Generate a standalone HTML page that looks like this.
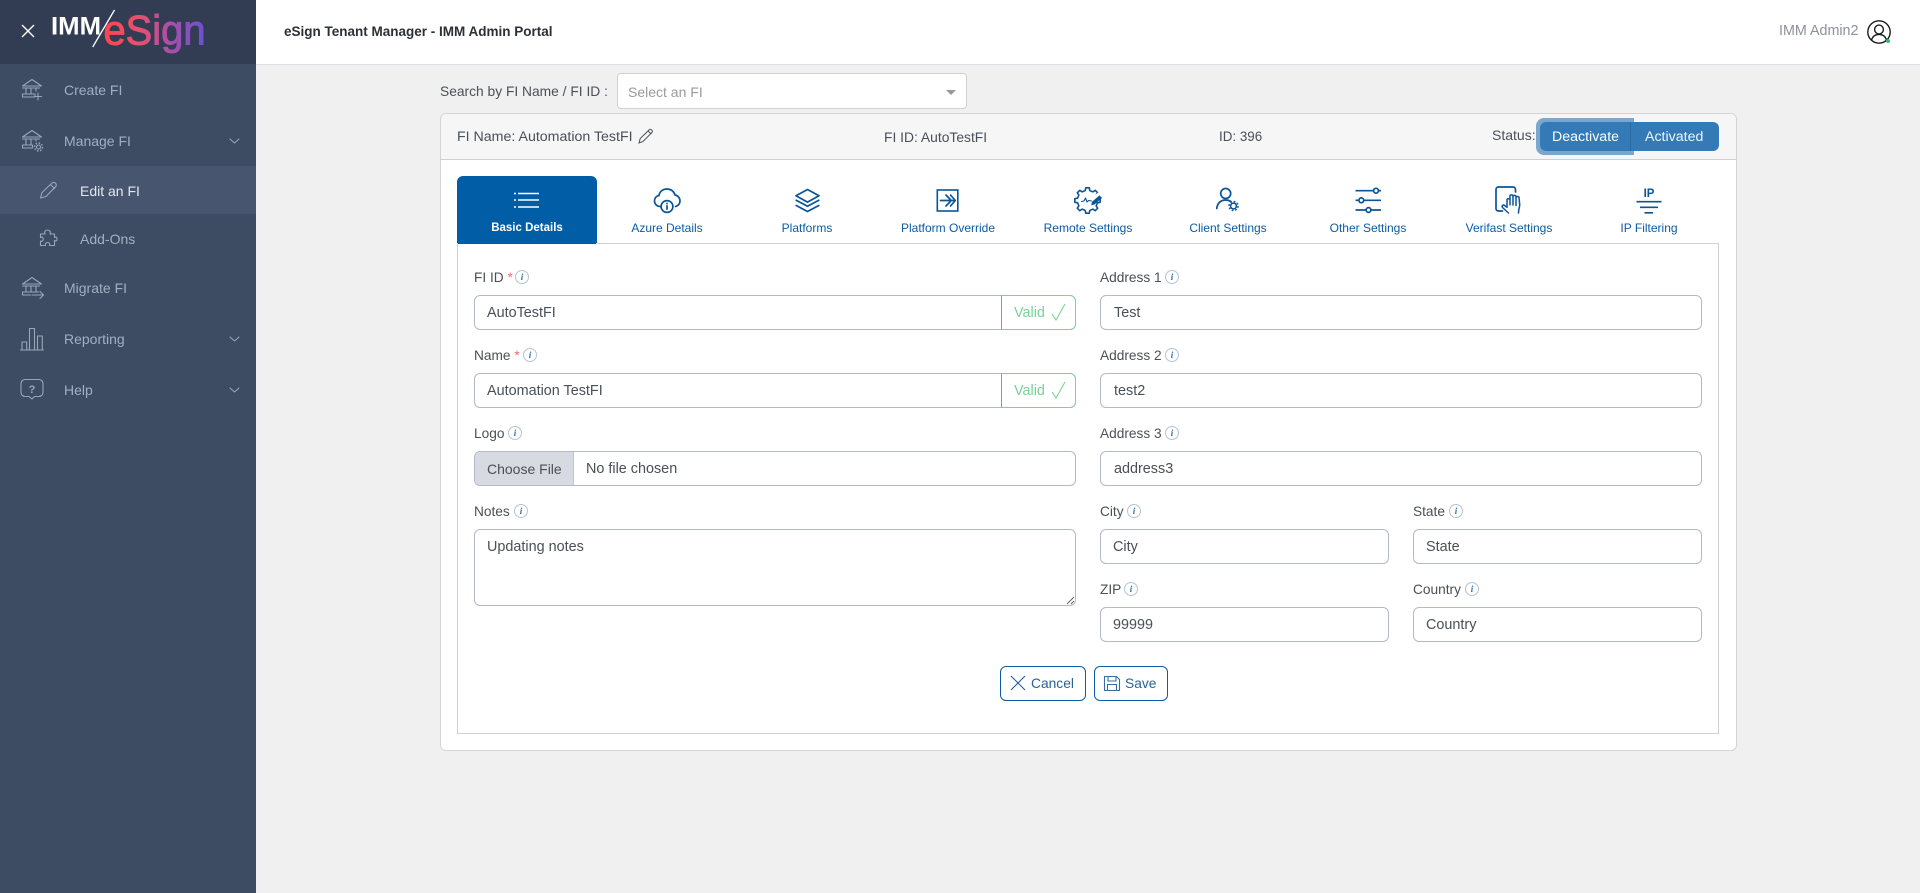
<!DOCTYPE html>
<html><head><meta charset="utf-8"><title>eSign Tenant Manager</title>
<style>
html,body{margin:0;padding:0;width:1920px;height:893px;overflow:hidden;background:#f0f0f1;font-family:"Liberation Sans",sans-serif;font-size:14px;color:#495057}
.a{position:absolute;white-space:nowrap}
.t{position:absolute;white-space:nowrap;line-height:20px;height:20px}
svg{position:absolute;overflow:visible}
.side{color:#a3afc0;font-size:14px}
.box{position:absolute;box-sizing:border-box;background:#fff;border:1px solid #b5b8c6;border-radius:6px;height:35px}
.lab{position:absolute;white-space:nowrap;line-height:20px;height:20px;font-size:13.7px;color:#4b5056}
.val{position:absolute;white-space:nowrap;line-height:20px;height:20px;font-size:14.4px;color:#495057}
.tab{position:absolute;width:140px;text-align:center;top:218px;line-height:20px;font-size:12px;color:#0a5ca3}
.req{color:#ef6b78}
.inf{position:absolute;box-sizing:border-box;width:14px;height:14px;border:1px solid #b4c4d3;border-radius:50%;font:italic bold 9px/12px "Liberation Serif",serif;text-align:center;color:#2f6ea5;background:#fff}
.ic{fill:none;stroke:#9aa6b8;stroke-width:1.1;stroke-linecap:round;stroke-linejoin:round}
.tb{fill:none;stroke:#0b5596;stroke-width:1.7;stroke-linecap:round;stroke-linejoin:round}
</style></head><body>

<!-- header -->
<div class="a" style="left:256px;top:0;width:1664px;height:65px;background:#fff;border-bottom:1px solid #dcdfe4;box-sizing:border-box"></div>
<div class="t" style="left:284px;top:22px;font-size:13.5px;font-weight:bold;color:#2b2f36">eSign Tenant Manager - IMM Admin Portal</div>
<div class="t" style="left:1779px;top:21px;font-size:14.3px;color:#8c919b">IMM Admin2</div>
<svg style="left:1867px;top:20px" width="24" height="24" viewBox="0 0 24 24"><circle cx="12" cy="12" r="11.2" fill="none" stroke="#1c1c1c" stroke-width="1.4"/><circle cx="12" cy="9.5" r="4.4" fill="none" stroke="#1c1c1c" stroke-width="1.4"/><path d="M4.5 20c1.2-4 4-5.6 7.500-5.600s6.300 1.600 7.500 5.600" fill="none" stroke="#1c1c1c" stroke-width="1.4"/><circle cx="21" cy="21" r="2" fill="#3bb76a"/></svg>

<!-- sidebar -->
<div class="a" style="left:0;top:0;width:256px;height:893px;background:#3d4b63"></div>
<div class="a" style="left:0;top:0;width:256px;height:64px;background:#323d54"></div>
<div class="a" style="left:0;top:166px;width:256px;height:48px;background:#47566e"></div>
<svg style="left:0;top:0" width="256" height="64">
<defs><linearGradient id="g" x1="104" x2="205" y1="0" y2="0" gradientUnits="userSpaceOnUse"><stop offset="0" stop-color="#ff4450"/><stop offset=".35" stop-color="#e8506f"/><stop offset=".65" stop-color="#a94fa8"/><stop offset="1" stop-color="#6c50d2"/></linearGradient></defs>
<path d="M22 25l12 12M34 25L22 37" stroke="#fff" stroke-width="1.4" fill="none"/>
<text x="51" y="34.500" font-family="Liberation Sans" font-weight="bold" font-size="25" fill="#fff" textLength="50" lengthAdjust="spacingAndGlyphs">IMM</text>
<path d="M114.500 10L92.700 47" stroke="#fff" stroke-width="1.300"/>
<text x="103.500" y="44.500" font-family="Liberation Sans" font-size="42" fill="url(#g)" stroke="url(#g)" stroke-width="1" textLength="102" lengthAdjust="spacingAndGlyphs">eSign</text>
</svg>
<div class="t side" style="left:64px;top:80px">Create FI</div>
<div class="t side" style="left:64px;top:131px">Manage FI</div>
<div class="t side" style="left:80px;top:181px;color:#e3e7ed">Edit an FI</div>
<div class="t side" style="left:80px;top:229px">Add-Ons</div>
<div class="t side" style="left:64px;top:278px">Migrate FI</div>
<div class="t side" style="left:64px;top:329px">Reporting</div>
<div class="t side" style="left:64px;top:380px">Help</div>
<svg style="left:0;top:0" width="256" height="420">
<g class="ic">
<!-- create -->
<path d="M22.500 86l9.500-6.500 9.500 6.500zM22.500 88h17M26 88v6M31 88v6M36 88v3M22.500 94h12.500v3H22.500z"/><path d="M38 93v7M34.500 96.500h7"/>
<!-- manage -->
<path d="M22.500 137l9.500-6.500 9.500 6.500zM22.500 139h17M26 139v6M31 139v6M36 139v2M22.500 145h10v3h-10z"/><circle cx="38.500" cy="147" r="2"/><circle cx="38.500" cy="147" r="4" stroke-dasharray="1.500 1.640" stroke-linecap="butt" stroke-width="1.500"/>
<!-- edit -->
<path d="M40.500 198l1.500-5.500 10-9.500c1-.9 2.800-.6 3.600.3s.9 2.500 0 3.400L46 196.500zM50.500 184.500l4 4"/>
<!-- addons -->
<path d="M40.500 234h4.500c-1-2.500.5-4 2.500-4s3.500 1.500 2.500 4h4.500v3.500c2-1 2.500 0 2.500 1.500s-.5 2.500-2.500 1.500v5h-5c.7-2-.5-3-2-3s-2.700 1-2 3h-5v-4.500c2 1 2.700-.5 2.700-2s-.7-2.500-2.700-1.500z"/>
<!-- migrate -->
<path d="M22.500 284l9.500-6.500 9.500 6.500zM22.500 286h17M26 286v6M31 286v6M36 286v6M22.500 292h16M22.500 292v3h8M32 295h11M40 291.500l3.500 3.500-3.500 3.500"/>
<!-- reporting -->
<path d="M20.500 350h23M22 342h4.700v8H22zM29.500 328.500h5V350h-5zM37.500 336h4.800v14h-4.800z"/>
<!-- help -->
<path d="M25 379.500h14c2.200 0 4 1.800 4 4v9c0 2.200-1.800 4-4 4h-4.500l-2.500 2.500-3-2.500H25c-2.200 0-4-1.800-4-4v-9c0-2.200 1.800-4 4-4z"/>
<!-- chevrons -->
<path d="M230 139l4.500 4 4.500-4M230 337l4.500 4 4.500-4M230 388l4.500 4 4.500-4" stroke-width="1"/>
</g>
<text x="32" y="393" font-family="Liberation Sans" font-weight="bold" font-size="11" fill="#9aa6b8" text-anchor="middle">?</text>
</svg>

<!-- search -->
<div class="t" style="left:440px;top:82px;font-size:13.8px;color:#4b5056">Search by FI Name / FI ID :</div>
<div class="a" style="left:617px;top:73px;width:350px;height:36px;box-sizing:border-box;background:#fff;border:1px solid #d0d0d3;border-radius:4px"></div>
<div class="t" style="left:628px;top:82px;font-size:14px;color:#9a9a9a">Select an FI</div>
<div class="a" style="left:946px;top:90px;width:0;height:0;border-left:5px solid transparent;border-right:5px solid transparent;border-top:5px solid #999"></div>

<!-- card -->
<div class="a" style="left:440px;top:113px;width:1297px;height:638px;box-sizing:border-box;background:#fff;border:1px solid #d4d4d6;border-radius:6px"></div>
<div class="a" style="left:441px;top:114px;width:1295px;height:46px;box-sizing:border-box;background:#f6f6f6;border-bottom:1px solid #d0d0d2;border-radius:5px 5px 0 0"></div>
<div class="t" style="left:457px;top:127px;font-size:14.2px">FI Name: Automation TestFI</div>
<svg style="left:638px;top:128px" width="16" height="16" viewBox="0 0 16 16"><path d="M1 15l1.200-4.500L11.500 1.500c1-.8 3.500 1 2.800 2.600L5 13.500z M10 3l3.300 3" fill="none" stroke="#4a4f57" stroke-width="1"/></svg>
<div class="t" style="left:884px;top:127px;font-size:13.85px">FI ID: AutoTestFI</div>
<div class="t" style="left:1219px;top:127px;font-size:13.4px">ID: 396</div>
<div class="t" style="left:1492px;top:125px;font-size:14px">Status:</div>
<div class="a" style="left:1536px;top:118px;width:98px;height:37px;background:#7aa7cf;border-radius:8px 0 0 8px"></div>
<div class="a" style="left:1540px;top:122px;width:179px;height:29px;background:#337ab7;border-radius:6px"></div>
<div class="a" style="left:1629.500px;top:122px;width:1px;height:29px;background:#2a69a3"></div>
<div class="t" style="left:1552px;top:127px;font-size:14.2px;color:#fff">Deactivate</div>
<div class="t" style="left:1645px;top:127px;font-size:14.2px;color:#f0f5fa">Activated</div>

<!-- tabs -->
<div class="a" style="left:457px;top:176px;width:140px;height:67px;background:#025da7;border-radius:6px 6px 0 0"></div>
<div class="a" style="left:457px;top:243px;width:1262px;height:491px;box-sizing:border-box;border:1px solid #ced0d4;background:#fff"></div>
<div class="a" style="left:458px;top:242px;width:138px;height:2px;background:#025da7"></div>
<div class="tab" style="left:457px;color:#fff;font-weight:bold;font-size:11.5px;top:218px">Basic Details</div>
<div class="tab" style="left:597px">Azure Details</div>
<div class="tab" style="left:737px">Platforms</div>
<div class="tab" style="left:878px">Platform Override</div>
<div class="tab" style="left:1018px">Remote Settings</div>
<div class="tab" style="left:1158px">Client Settings</div>
<div class="tab" style="left:1298px">Other Settings</div>
<div class="tab" style="left:1439px">Verifast Settings</div>
<div class="tab" style="left:1579px">IP Filtering</div>

<svg style="left:0;top:0" width="1920" height="260">
<!-- list -->
<g fill="none" stroke="#fff" stroke-width="1.500"><path d="M518 193.500h21M518 200h21M518 207h21M514 193.500h2M514 200h2M514 207h2"/></g>
<g class="tb">
<!-- cloud info -->
<path d="M660.500 206.500c-3.500 0-6-2.500-6-5.500 0-3 1.800-5 4.500-5.500.5-4 4-6.500 8-6.500 4 0 7 2.500 8 6 3 .5 5 3 5 6 0 2.500-1.500 4.500-4.500 5.500"/><circle cx="667" cy="206.500" r="5.900" fill="#fff"/><path d="M667 205.700v3.500M667 203.300v.3"/>
<!-- layers -->
<path d="M807.500 189.500l11.500 6.300-11.500 6.300-11.500-6.300z"/><path d="M796.200 200.300l11.300 6 11.300-6"/><path d="M796.200 205.500l11.300 6 11.300-6"/>
<!-- override -->
<rect x="937.300" y="190" width="20.500" height="21" stroke-width="1.600" stroke-linecap="butt" stroke-linejoin="miter"/><path d="M940.500 200.500h13M946 195l5.200 5.500-5.200 5.500M950.500 195l4.800 5.500-4.800 5.500"/>
<!-- remote gear -->
<g transform="translate(1087.500,200.500)" stroke-width="1.600"><path d="M9.940-2.290L12.680-1.780V1.780L9.940 2.290 8.650 5.410 10.220 7.710 7.710 10.220 5.410 8.650 2.290 9.940 1.780 12.680H-1.780L-2.290 9.940-5.410 8.650-7.710 10.220-10.220 7.710-8.650 5.410-9.940 2.290-12.680 1.780V-1.780L-9.940-2.290-8.650-5.410-10.220-7.710-7.710-10.220-5.410-8.650-2.290-9.940-1.780-12.680H1.780L2.290-9.940 5.410-8.650 7.710-10.220 10.220-7.710 8.650-5.410z"/></g>
<path d="M1090.500 203l10-8.500" stroke="#fff" stroke-width="6" stroke-linecap="butt"/>
<path d="M1081.500 201.500l2.500-.5 1.500-3 1.500 4 1.500-1.500 3 .5" stroke-width="1.100"/><path d="M1092.500 202l7-6 1.800 2-7 6-2.500.7z" fill="#0b5596" stroke-width="1"/>
<!-- client -->
<circle cx="1225.700" cy="193.500" r="5"/><path d="M1216.800 208.500c.5-5.500 4-8.500 9-8.500 2 0 3.500.5 5 1.500"/>
<circle cx="1233.500" cy="206" r="2.900" stroke-width="1.500"/><circle cx="1233.500" cy="206" r="4.500" stroke-width="1.500" stroke-dasharray="1.770 1.770" stroke-linecap="butt"/>
<!-- sliders -->
<path d="M1355.500 190.700h17.800M1378.500 190.700h2.500M1355.500 200.300h3.500M1364 200.300h17M1355.500 210h10.500M1371 210h10" stroke-linecap="butt"/><circle cx="1376" cy="190.700" r="2.400"/><circle cx="1361.300" cy="200.300" r="2.400"/><circle cx="1368.500" cy="210" r="2.400"/>
<!-- verifast -->
<path d="M1515.500 192v-2.500c0-1.400-1-2.500-2.500-2.500h-14.500c-1.500 0-2.500 1-2.500 2.500v19c0 1.500 1 2.500 2.500 2.500h4"/><path d="M1508.500 213l-6-5.500c-1.200-1.800.8-3 2-2l2.500 1.800v-7.500c0-1.400 2.800-1.400 3 0M1510 199.800v5M1510 199.500v-3.500c0-1.500 2.800-1.500 3 0v9M1513 196.500c0-1.500 2.800-1.500 3 0v9M1516 197.500c.2-1.300 2.800-1.300 3 0l.7 7c.2 2.500-1.200 4-1.200 8.500" stroke-width="1.500"/>
<!-- ip -->
<path d="M1636.500 201.700h25M1640 207.300h18M1644.500 212.800h8.500" stroke-width="1.700" stroke-linecap="butt"/>
</g>
<text x="1649" y="197" text-anchor="middle" font-family="Liberation Sans" font-weight="bold" font-size="11.500" fill="#0b5596">IP</text>
</svg>

<!-- left column -->
<div class="lab" style="left:474px;top:268px">FI ID <span class="req">*</span></div>
<div class="inf" style="left:515px;top:270px">i</div>
<div class="box" style="left:474px;top:295px;width:602px"></div>
<div class="a" style="left:1001px;top:295px;width:75px;height:35px;box-sizing:border-box;background:#fff;border:1px solid #7fd09c;border-left-color:#64b183;border-radius:0 6px 6px 0"></div>
<div class="val" style="left:487px;top:303px">AutoTestFI</div>
<div class="t" style="left:1014px;top:303px;font-size:14.4px;color:#79d198">Valid</div>
<svg style="left:1051px;top:303px" width="16" height="19"><path d="M1 11l4 6L14 1" fill="none" stroke="#79d198" stroke-width="1.100"/></svg>

<div class="lab" style="left:474px;top:346px">Name <span class="req">*</span></div>
<div class="inf" style="left:523px;top:348px">i</div>
<div class="box" style="left:474px;top:373px;width:602px"></div>
<div class="a" style="left:1001px;top:373px;width:75px;height:35px;box-sizing:border-box;background:#fff;border:1px solid #7fd09c;border-left-color:#64b183;border-radius:0 6px 6px 0"></div>
<div class="val" style="left:487px;top:381px">Automation TestFI</div>
<div class="t" style="left:1014px;top:381px;font-size:14.4px;color:#79d198">Valid</div>
<svg style="left:1051px;top:381px" width="16" height="19"><path d="M1 11l4 6L14 1" fill="none" stroke="#79d198" stroke-width="1.100"/></svg>

<div class="lab" style="left:474px;top:424px">Logo</div>
<div class="inf" style="left:508px;top:426px">i</div>
<div class="box" style="left:474px;top:451px;width:602px"></div>
<div class="a" style="left:475px;top:452px;width:98px;height:33px;background:#d7dae0;border-right:1px solid #c0c3cc;border-radius:5px 0 0 5px"></div>
<div class="val" style="left:487px;top:459px;font-size:14px">Choose File</div>
<div class="val" style="left:586px;top:459px">No file chosen</div>

<div class="lab" style="left:474px;top:502px">Notes</div>
<div class="inf" style="left:514px;top:504px">i</div>
<div class="box" style="left:474px;top:529px;width:602px;height:77px"></div>
<div class="val" style="left:487px;top:537px">Updating notes</div>
<svg style="left:1066px;top:596px" width="9" height="9"><path d="M1 8l7-7M5 8l3-3" stroke="#666" stroke-width="1"/></svg>

<!-- right column -->
<div class="lab" style="left:1100px;top:268px">Address 1</div>
<div class="inf" style="left:1165px;top:270px">i</div>
<div class="box" style="left:1100px;top:295px;width:602px"></div>
<div class="val" style="left:1114px;top:303px">Test</div>

<div class="lab" style="left:1100px;top:346px">Address 2</div>
<div class="inf" style="left:1165px;top:348px">i</div>
<div class="box" style="left:1100px;top:373px;width:602px"></div>
<div class="val" style="left:1114px;top:381px">test2</div>

<div class="lab" style="left:1100px;top:424px">Address 3</div>
<div class="inf" style="left:1165px;top:426px">i</div>
<div class="box" style="left:1100px;top:451px;width:602px"></div>
<div class="val" style="left:1114px;top:459px">address3</div>

<div class="lab" style="left:1100px;top:502px">City</div>
<div class="inf" style="left:1127px;top:504px">i</div>
<div class="box" style="left:1100px;top:529px;width:289px"></div>
<div class="val" style="left:1113px;top:537px">City</div>

<div class="lab" style="left:1413px;top:502px">State</div>
<div class="inf" style="left:1449px;top:504px">i</div>
<div class="box" style="left:1413px;top:529px;width:289px"></div>
<div class="val" style="left:1426px;top:537px">State</div>

<div class="lab" style="left:1100px;top:580px">ZIP</div>
<div class="inf" style="left:1124px;top:582px">i</div>
<div class="box" style="left:1100px;top:607px;width:289px"></div>
<div class="val" style="left:1113px;top:615px">99999</div>

<div class="lab" style="left:1413px;top:580px">Country</div>
<div class="inf" style="left:1465px;top:582px">i</div>
<div class="box" style="left:1413px;top:607px;width:289px"></div>
<div class="val" style="left:1426px;top:615px">Country</div>

<!-- buttons -->
<div class="a" style="left:1000px;top:666px;width:86px;height:35px;box-sizing:border-box;border:1px solid #0b5ea6;border-radius:6px;background:#fff"></div>
<svg style="left:1010px;top:675px" width="16" height="16"><path d="M1 1l14 14M15 1L1 15" stroke="#205f98" stroke-width="1.100" fill="none"/></svg>
<div class="t" style="left:1031px;top:674px;font-size:13.8px;color:#2a6296">Cancel</div>
<div class="a" style="left:1094px;top:666px;width:74px;height:35px;box-sizing:border-box;border:1px solid #0b5ea6;border-radius:6px;background:#fff"></div>
<svg style="left:1104px;top:676px" width="16" height="15" viewBox="0 0 16 15"><g fill="none" stroke="#3a6e9f" stroke-width="1.100"><path d="M.5.500h12l3 3v11H.5zM4 .500v4.500h8V.5M3.500 14.500V8.500h9v6"/></g></svg>
<div class="t" style="left:1125px;top:674px;font-size:13.8px;color:#2a6296">Save</div>
</body></html>
